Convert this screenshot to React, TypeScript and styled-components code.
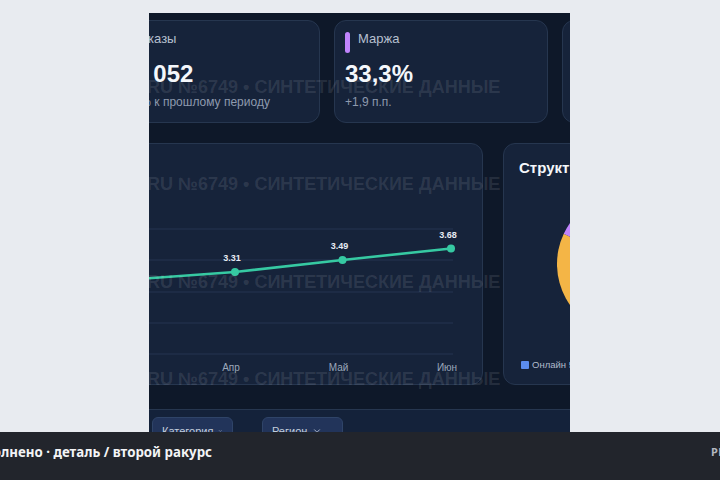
import React from "react";
import styled, { createGlobalStyle } from "styled-components";
import { ChevronDown } from "lucide-react";

const GlobalStyle = createGlobalStyle`
  html, body { margin: 0; padding: 0; background: #e8ebf0; }
  body { font-family: "Liberation Sans", Arial, sans-serif; }
  #root { width: 720px; height: 480px; }
`;

const Page = styled.div`
  width: 720px;
  height: 480px;
  display: flex;
  flex-direction: column;
  overflow: hidden;
  background: #e8ebf0;
`;

const Stage = styled.main`
  flex: 1;
  min-height: 0;
  overflow: hidden;
  display: flex;
  justify-content: flex-start;
  padding: 13px 0 0 149px;
`;

const Panel = styled.section`
  position: relative;
  flex: none;
  width: 421px;
  height: 470px;
  overflow: hidden;
  background: #0e1829;
`;

const Canvas = styled.div`
  margin-left: -40px;
  padding-top: 7px;
  width: 900px;
`;

const KpiRow = styled.div`
  display: grid;
  grid-template-columns: 211px repeat(3, 214px);
  gap: 14px;
`;

const KpiCard = styled.div`
  box-sizing: border-box;
  height: 103px;
  padding: 11px 10px;
  background: #16233a;
  border: 1px solid #26364f;
  border-radius: 12px;
  display: flex;
  flex-direction: column;
  min-width: 0;
`;

const KpiHead = styled.div`
  display: flex;
  align-items: flex-start;
  gap: 8px;
`;

const Accent = styled.span<{ $color: string }>`
  flex: none;
  width: 5px;
  height: 21px;
  border-radius: 3px;
  background: ${(p) => p.$color};
`;

const KpiLabel = styled.span`
  font-size: 13px;
  line-height: 13px;
  color: #b6c0d0;
  white-space: nowrap;
`;

const KpiValue = styled.div`
  margin-top: 7px;
  font-size: 24px;
  line-height: 28px;
  font-weight: 700;
  color: #f4f7fb;
  white-space: nowrap;
`;

const KpiSub = styled.div`
  margin-top: 7px;
  font-size: 12px;
  line-height: 14px;
  color: #8e9aae;
  white-space: nowrap;
`;

const ChartRow = styled.div`
  display: flex;
  gap: 20px;
  margin-top: 20px;
  margin-left: -3px;
`;

const Card = styled.div<{ $w: number }>`
  flex: none;
  box-sizing: border-box;
  width: ${(p) => p.$w}px;
  height: 242px;
  background: #16233a;
  border: 1px solid #26364f;
  border-radius: 12px;
  overflow: hidden;
`;

const PieCard = styled(Card)`
  padding: 14px 15px 0;
  display: flex;
  flex-direction: column;
`;

const CardTitle = styled.div`
  font-size: 15px;
  line-height: 19px;
  font-weight: 700;
  color: #f4f7fb;
  white-space: nowrap;
`;

const PieWrap = styled.div`
  margin-top: 7px;
  display: flex;
  justify-content: center;
`;

const Legend = styled.div`
  margin-top: 15px;
  padding-left: 2px;
  display: flex;
  gap: 12px;
`;

const LegendItem = styled.div`
  display: flex;
  align-items: center;
  gap: 3px;
  font-size: 9.5px;
  line-height: 12px;
  color: #b0bacb;
  white-space: nowrap;
`;

const Swatch = styled.span<{ $color: string }>`
  width: 8px;
  height: 8px;
  border-radius: 1px;
  background: ${(p) => p.$color};
`;

const FilterBar = styled.div`
  margin-top: 24px;
  border-top: 1px solid #26364f;
  background: #14223a;
  padding: 7px 3px 20px;
  display: flex;
  gap: 29px;
`;

const FilterButton = styled.button`
  box-sizing: border-box;
  width: 81px;
  height: 28px;
  padding: 0 9px;
  display: flex;
  align-items: center;
  gap: 5px;
  background: #22345a;
  border: 1px solid #2f4468;
  border-radius: 6px;
  color: #c3cddc;
  font-family: "Liberation Sans", Arial, sans-serif;
  font-size: 11px;
  white-space: nowrap;
`;

const Watermark = styled.div`
  position: absolute;
  inset: 0;
  pointer-events: none;
  display: flex;
  flex-direction: column;
  padding-top: 65px;
  gap: 79.3px;
  margin-left: -2px;
  font-size: 18px;
  line-height: 18px;
  font-weight: 700;
  color: rgba(255, 255, 255, 0.1);
  white-space: nowrap;
`;

const Footer = styled.footer`
  flex: none;
  height: 48px;
  box-sizing: border-box;
  padding-top: 10px;
  background: #22252c;
  display: flex;
  align-items: flex-start;
  overflow: hidden;
  font-family: "Noto Sans", "Open Sans", sans-serif;
`;

const Caption = styled.div`
  flex: 0 0 711px;
  overflow: hidden;
  white-space: nowrap;
  font-size: 13.3px;
  line-height: 20px;
  font-weight: 700;
  color: #f3f4f6;
`;

const CaptionText = styled.span<{ $shift: number }>`
  display: inline-block;
  margin-left: ${(p) => -p.$shift}px;
`;

const Tag = styled.div`
  flex: none;
  margin-top: 3px;
  font-size: 11px;
  line-height: 14px;
  font-weight: 700;
  color: #b3b7bf;
  letter-spacing: 0.3px;
  white-space: nowrap;
`;

const kpis = [
  { label: "Заказы", value: "12 052", sub: "+12% к прошлому периоду", color: "#60a5fa" },
  { label: "Маржа", value: "33,3%", sub: "+1,9 п.п.", color: "#c084fc" },
  { label: "Средний чек", value: "3,68 тыс. ₽", sub: "+5,4% к прошлому периоду", color: "#34d399" },
  { label: "Возвраты", value: "2,1%", sub: "−0,3 п.п.", color: "#f59e0b" },
];

const points = [
  { m: "Мар", v: "3.19", x: 18.5, y: 136 },
  { m: "Апр", v: "3.31", x: 128, y: 128 },
  { m: "Май", v: "3.49", x: 235.5, y: 116 },
  { m: "Июн", v: "3.68", x: 344, y: 104.5 },
];

const gridY = [85, 116, 148, 179, 210];

function LineChart() {
  const d = points.map((p, i) => `${i ? "L" : "M"}${p.x} ${p.y}`).join(" ");
  return (
    <svg width={375} height={240} viewBox="0 0 375 240">
      {gridY.map((y) => (
        <line key={y} x1={4} x2={346} y1={y} y2={y} stroke="#243550" strokeWidth={1} />
      ))}
      <path d={d} fill="none" stroke="#36c9a2" strokeWidth={2.6} strokeLinejoin="round" strokeLinecap="round" />
      {points.map((p) => (
        <g key={p.m}>
          <circle cx={p.x} cy={p.y} r={4} fill="#36c9a2" />
          <text
            x={p.x - 3}
            y={p.y - 11}
            textAnchor="middle"
            fontSize={9}
            fontWeight={700}
            fill="#e6ebf3"
            fontFamily="Liberation Sans, Arial, sans-serif"
          >
            {p.v}
          </text>
          <text
            x={p.x - 4}
            y={227}
            textAnchor="middle"
            fontSize={10}
            fill="#9ca8ba"
            fontFamily="Liberation Sans, Arial, sans-serif"
          >
            {p.m}
          </text>
        </g>
      ))}
    </svg>
  );
}

const slices = [
  { name: "Онлайн", pct: 52, color: "#5b8def" },
  { name: "Розница", pct: 30, color: "#f4b546" },
  { name: "Партнёры", pct: 18, color: "#c084fc" },
];

function slicePath(cx: number, cy: number, r: number, a0: number, a1: number) {
  const rad = (a: number) => (a * Math.PI) / 180;
  const x0 = cx + r * Math.sin(rad(a0));
  const y0 = cy - r * Math.cos(rad(a0));
  const x1 = cx + r * Math.sin(rad(a1));
  const y1 = cy - r * Math.cos(rad(a1));
  const large = a1 - a0 > 180 ? 1 : 0;
  return `M${cx} ${cy} L${x0.toFixed(2)} ${y0.toFixed(2)} A${r} ${r} 0 ${large} 1 ${x1.toFixed(2)} ${y1.toFixed(2)} Z`;
}

function PieChart() {
  let start = 0;
  return (
    <svg width={160} height={160} viewBox="0 0 160 160">
      {slices.map((s) => {
        const end = start + (s.pct / 100) * 360;
        const path = slicePath(80, 80, 71, start, end);
        start = end;
        return <path key={s.name} d={path} fill={s.color} />;
      })}
    </svg>
  );
}

export default function App() {
  return (
    <>
      <GlobalStyle />
      <Page>
        <Stage>
          <Panel>
            <Canvas>
              <KpiRow>
                {kpis.map((k) => (
                  <KpiCard key={k.label}>
                    <KpiHead>
                      <Accent $color={k.color} />
                      <KpiLabel>{k.label}</KpiLabel>
                    </KpiHead>
                    <KpiValue>{k.value}</KpiValue>
                    <KpiSub>{k.sub}</KpiSub>
                  </KpiCard>
                ))}
              </KpiRow>
              <ChartRow>
                <Card $w={377}>
                  <LineChart />
                </Card>
                <PieCard $w={250}>
                  <CardTitle>Структура продаж</CardTitle>
                  <PieWrap>
                    <PieChart />
                  </PieWrap>
                  <Legend>
                    {slices.map((s) => (
                      <LegendItem key={s.name}>
                        <Swatch $color={s.color} />
                        {s.name} {s.pct}%
                      </LegendItem>
                    ))}
                  </Legend>
                </PieCard>
              </ChartRow>
            </Canvas>
            <FilterBar>
              <FilterButton>
                Категория <ChevronDown size={10} strokeWidth={2} />
              </FilterButton>
              <FilterButton>
                Регион <ChevronDown size={10} strokeWidth={2} />
              </FilterButton>
            </FilterBar>
            <Watermark>
              {[0, 1, 2, 3].map((i) => (
                <div key={i}>RU №6749 • СИНТЕТИЧЕСКИЕ ДАННЫЕ</div>
              ))}
            </Watermark>
          </Panel>
        </Stage>
        <Footer>
          <Caption>
            <CaptionText $shift={36}>Выполнено · деталь / второй ракурс</CaptionText>
          </Caption>
          <Tag>РЕЖИМ ПРОСМОТРА</Tag>
        </Footer>
      </Page>
    </>
  );
}
